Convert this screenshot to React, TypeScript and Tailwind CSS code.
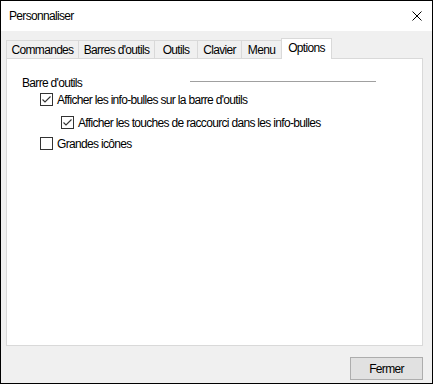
import React from "react";

const font = { fontFamily: '"Liberation Sans", Arial, sans-serif' };

function Check({ checked }: { checked: boolean }) {
  return (
    <div className="w-[13px] h-[13px] border border-[#333333] bg-white shrink-0 flex items-center justify-center">
      {checked && (
        <svg width="11" height="11" viewBox="0 0 11 11">
          <polyline points="1.5,5.5 4,8 9.5,2.5" fill="none" stroke="#333333" strokeWidth="1.1" />
        </svg>
      )}
    </div>
  );
}

const tabs = [
  { label: "Commandes", w: "w-[72px]" },
  { label: "Barres d'outils", w: "w-[76px]" },
  { label: "Outils", w: "w-[43px]" },
  { label: "Clavier", w: "w-[44px]" },
  { label: "Menu", w: "w-[40px]" },
];

export default function App() {
  return (
    <div
      className="w-[433px] h-[384px] border border-black bg-[#f0f0f0] flex flex-col text-[12px] tracking-[-0.68px] text-black overflow-hidden whitespace-nowrap"
      style={font}
    >
      <div className="h-[30px] bg-white flex items-center justify-between pl-[8px] pr-[10px] shrink-0">
        <span className="leading-none">Personnaliser</span>
        <svg width="10" height="10" viewBox="0 0 10 10">
          <path d="M0.5 0.5 L9.5 9.5 M9.5 0.5 L0.5 9.5" stroke="#000" strokeWidth="1" />
        </svg>
      </div>
      <div className="flex flex-col pl-[5px] pr-[9px] pt-[7px]">
        <div className="h-[20px] flex items-end">
          {tabs.map((t) => (
            <div
              key={t.label}
              className={`${t.w} h-[18px] border-t border-l border-[#d9d9d9] bg-[#f0f0f0] flex items-center justify-center leading-none`}
            >
              {t.label}
            </div>
          ))}
          <div className="w-[51px] h-[21px] -mb-px relative z-10 border-t border-l border-r border-[#d9d9d9] bg-white flex items-center justify-center leading-none pb-[2px]">
            Options
          </div>
        </div>
        <div className="h-[288px] border border-[#d9d9d9] bg-white flex flex-col">
          <div className="mt-[16px] h-[15px] flex items-center justify-between pl-[15px] pr-[46px]">
            <span className="leading-none">Barre d'outils</span>
            <div className="w-[186px] h-px bg-[#a0a0a0] -mt-[3px]" />
          </div>
          <div className="mt-[3px] h-[13px] flex items-center pl-[33px] gap-[4px]">
            <Check checked />
            <span className="leading-none">Afficher les info-bulles sur la barre d'outils</span>
          </div>
          <div className="mt-[10px] h-[13px] flex items-center pl-[54px] gap-[4px]">
            <Check checked />
            <span className="leading-none">Afficher les touches de raccourci dans les info-bulles</span>
          </div>
          <div className="mt-[8px] h-[13px] flex items-center pl-[33px] gap-[4px]">
            <Check checked={false} />
            <span className="leading-none">Grandes icônes</span>
          </div>
        </div>
        <div className="mt-[11px] flex justify-end">
          <button className="w-[73px] h-[23px] bg-[#e1e1e1] border border-[#adadad] flex items-center justify-center leading-none">
            Fermer
          </button>
        </div>
      </div>
    </div>
  );
}
